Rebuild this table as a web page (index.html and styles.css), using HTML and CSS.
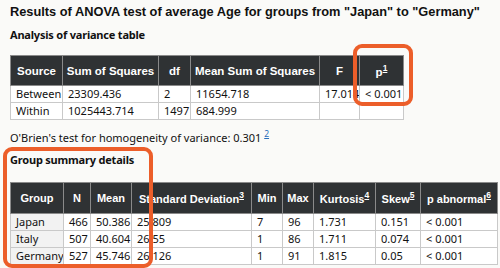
FILE: index.html
```html
<!DOCTYPE html>
<html lang="en">
<head>
  <meta charset="UTF-8" />
  <title>ANOVA results</title>
  <link rel="stylesheet" href="styles.css">
</head>
<body>
  <h1>Results of ANOVA test of average Age for groups from "Japan" to "Germany"</h1>

  <h2>Analysis of variance table</h2>
  <table class="anova">
    <thead>
      <tr>
        <th class="c-source">Source</th>
        <th class="c-ss">Sum of Squares</th>
        <th class="c-df">df</th>
        <th class="c-ms">Mean Sum of Squares</th>
        <th class="c-f">F</th>
        <th class="c-p">p<sup><a href="#">1</a></sup></th>
      </tr>
    </thead>
    <tbody>
      <tr><td>Between</td><td>23309.436</td><td>2</td><td>11654.718</td><td>17.014</td><td>&lt; 0.001</td></tr>
      <tr><td>Within</td><td>1025443.714</td><td>1497</td><td>684.999</td><td></td><td></td></tr>
    </tbody>
  </table>

  <p class="note">O'Brien's test for homogeneity of variance: 0.301 <sup><a href="#">2</a></sup></p>

  <h2 class="groups-title">Group summary details</h2>
  <table class="groups">
    <thead>
      <tr>
        <th class="c-group">Group</th>
        <th class="c-n">N</th>
        <th class="c-mean">Mean</th>
        <th class="c-sd">Standard Deviation<sup><a href="#">3</a></sup></th>
        <th class="c-min">Min</th>
        <th class="c-max">Max</th>
        <th class="c-kurt">Kurtosis<sup><a href="#">4</a></sup></th>
        <th class="c-skew">Skew<sup><a href="#">5</a></sup></th>
        <th class="c-pab">p abnormal<sup><a href="#">6</a></sup></th>
      </tr>
    </thead>
    <tbody>
      <tr><td class="name">Japan</td><td>466</td><td>50.386</td><td>25.809</td><td>7</td><td>96</td><td>1.731</td><td>0.151</td><td>&lt; 0.001</td></tr>
      <tr><td class="name">Italy</td><td>507</td><td>40.604</td><td>26.55</td><td>1</td><td>86</td><td>1.711</td><td>0.074</td><td>&lt; 0.001</td></tr>
      <tr><td class="name">Germany</td><td>527</td><td>45.746</td><td>26.126</td><td>1</td><td>91</td><td>1.815</td><td>0.05</td><td>&lt; 0.001</td></tr>
    </tbody>
  </table>

  <div class="mark mark-p"></div>
  <div class="mark mark-groups"></div>
</body>
</html>
```

FILE: styles.css
```css
body {
  margin: 0;
  padding: 4px 0 0 10px;
  background: #fafaf8;
  color: #111;
  font-family: 'Noto Sans', sans-serif;
  font-size: 11px;
  position: relative;
  height: 268px;
  overflow: hidden;
  box-sizing: border-box;
}
h1 {
  font-family: 'Liberation Sans', Arial, sans-serif;
  font-size: 12.8px;
  font-weight: bold;
  margin: 0 0 8px;
  line-height: 16px;
  white-space: nowrap;
}
h2 {
  font-size: 11px;
  font-weight: bold;
  margin: 0 0 13px;
  line-height: 14px;
  letter-spacing: -0.2px;
}
.groups-title {
  margin-bottom: 15px;
}
table {
  border-collapse: collapse;
  table-layout: fixed;
  background: #fff;
}
th {
  background: #2f3234;
  color: #fff;
  font-family: 'Liberation Sans', Arial, sans-serif;
  font-size: 11.5px;
  font-weight: bold;
  border: 1px solid #8a8a8a;
  padding: 0;
  text-align: center;
  white-space: nowrap;
  overflow: hidden;
}
th sup {
  font-size: 8.5px;
}
th a {
  color: #fff;
}
td {
  border: 1px solid #c9c9c9;
  padding: 0 5px;
  height: 16px;
  line-height: 16px;
  white-space: nowrap;
  overflow: hidden;
}
.anova { width: 393px; }
.anova th { height: 29px; }
.c-source { width: 51px; }
.c-ss { width: 95px; }
.c-df { width: 31px; }
.c-ms { width: 128px; }
.c-f { width: 39px; }
.c-p { width: 43px; }

.note {
  margin: 7px 0 8px;
  line-height: 14px;
}
.note a {
  color: #2a6ebb;
  font-size: 8.5px;
}

.groups { width: 487px; }
.groups th { height: 30px; font-size: 11px; }
.groups td.name { background: #f2f2f2; }
.c-group { width: 52px; }
.c-n { width: 26px; }
.c-mean { width: 40px; }
.c-sd { width: 119px; }
.c-min { width: 30px; }
.c-max { width: 30px; }
.c-kurt { width: 61px; }
.c-skew { width: 44px; }
.c-pab { width: 76px; }

.mark {
  position: absolute;
  border: 4px solid #ec5e2a;
  border-radius: 9px;
  box-sizing: border-box;
}
.mark-p {
  left: 353px;
  top: 44px;
  width: 60px;
  height: 62px;
}
.mark-groups {
  left: 3px;
  top: 147px;
  width: 150px;
  height: 121px;
}
```
